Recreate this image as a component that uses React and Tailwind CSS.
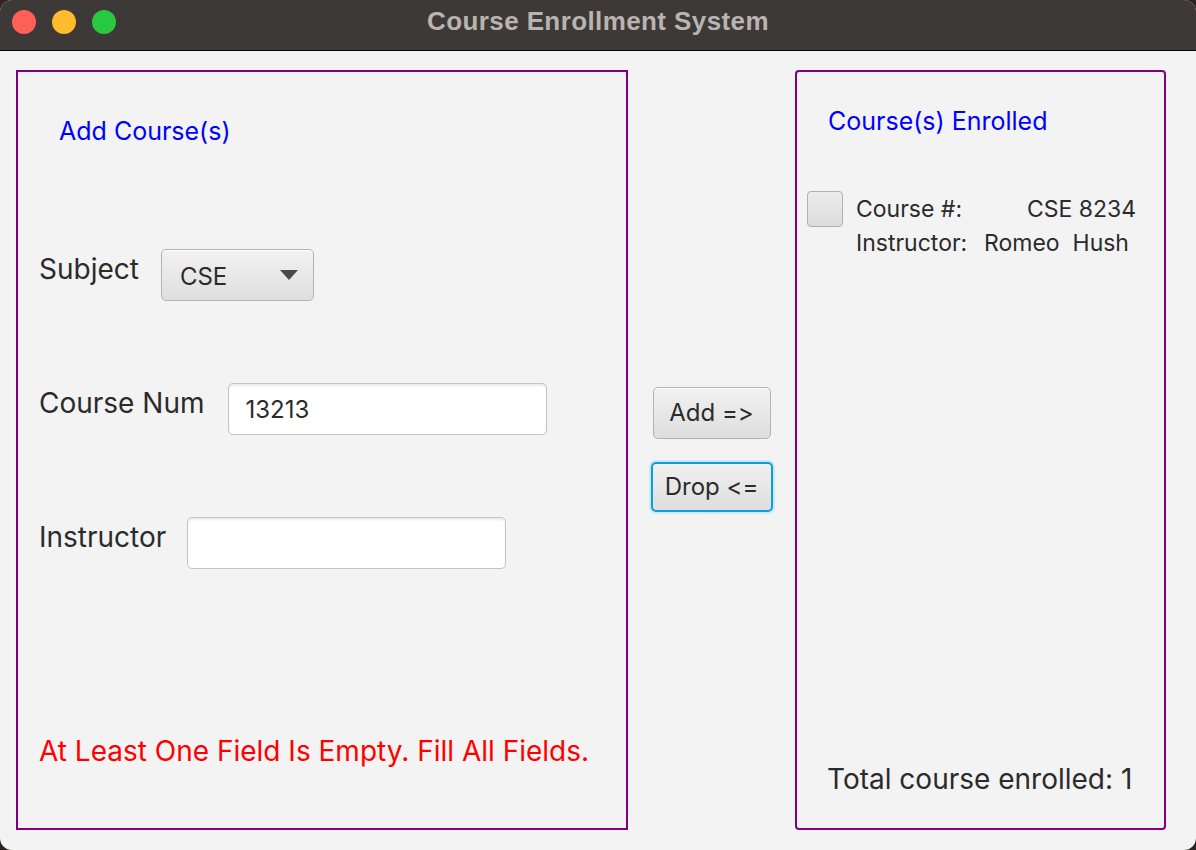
import React, { useState } from 'react';

const font = "font-['Inter','Liberation_Sans',sans-serif] [font-feature-settings:'calt'_0,'liga'_0]";

const TextBox = ({ value, width, onChange }) => (
  <input
    value={value}
    onChange={onChange}
    className={`h-[52px] ${width} rounded-[5px] border border-[#c4c4c4] bg-white px-[17px] text-[24px] text-[#2b2b2b] shadow-[inset_0_2px_2px_rgba(0,0,0,0.08)] outline-none ${font}`}
  />
);

const App = () => {
  const [courseNum, setCourseNum] = useState('13213');
  const [instructor, setInstructor] = useState('');

  return (
    <div className="h-[850px] w-[1196px] bg-[#2a2522]">
      <div className={`flex h-[850px] w-[1196px] flex-col overflow-hidden rounded-[12px] bg-[#f3f3f3] ${font}`}>
        {/* title bar */}
        <div className="relative flex h-[51px] shrink-0 items-center justify-center border-b border-black bg-[#3d3936] pb-[8px]">
          <div className="absolute left-[12px] top-[10px] flex gap-[16px]">
            <span className="h-[24px] w-[24px] rounded-full bg-[#fe5f57]" />
            <span className="h-[24px] w-[24px] rounded-full bg-[#febb2e]" />
            <span className="h-[24px] w-[24px] rounded-full bg-[#28c840]" />
          </div>
          <span className="text-[26px] font-bold tracking-[0.4px] text-[#b9b4b1] font-['Liberation_Sans','Inter',sans-serif]">
            Course Enrollment System
          </span>
        </div>

        {/* body */}
        <div className="flex pl-[16px] pt-[19px]">
          {/* left panel */}
          <div className="flex h-[760px] w-[612px] flex-col border-2 border-[#800080] pl-[21px]">
            <div className="mt-[44px] pl-[20px] text-[25px] leading-[30px] text-[#0000ff]">Add Course(s)</div>

            <div className="mt-[103px] flex items-start gap-[22px]">
              <span className="mt-[3px] text-[28px] leading-[34px] text-[#2b2b2b]">Subject</span>
              <div className="flex h-[52px] w-[153px] items-center justify-between rounded-[5px] border border-[#b3b3b3] bg-gradient-to-b from-[#f2f2f2] to-[#dedede] pl-[18px] pr-[15px] shadow-[inset_0_1px_0_#ffffff]">
                <span className="pt-[4px] text-[24px] text-[#2b2b2b]">CSE</span>
                <svg width="18" height="10" viewBox="0 0 18 10">
                  <path d="M0 0 H18 L9 10 Z" fill="#4a4a4a" />
                </svg>
              </div>
            </div>

            <div className="mt-[82px] flex items-start gap-[23px]">
              <span className="mt-[3px] text-[28px] leading-[34px] text-[#2b2b2b]">Course Num</span>
              <TextBox value={courseNum} width="w-[319px]" onChange={(e) => setCourseNum(e.target.value)} />
            </div>

            <div className="mt-[82px] flex items-start gap-[21px]">
              <span className="mt-[3px] text-[28px] leading-[34px] text-[#2b2b2b]">Instructor</span>
              <TextBox value={instructor} width="w-[319px]" onChange={(e) => setInstructor(e.target.value)} />
            </div>

            <div className="mt-[165px] text-[28px] leading-[34px] text-[#ff0000]">
              At Least One Field Is Empty. Fill All Fields.
            </div>
          </div>

          {/* middle buttons */}
          <div className="flex w-[167px] flex-col items-center pt-[317px]">
            <button className="h-[52px] w-[118px] rounded-[5px] border border-[#b3b3b3] bg-gradient-to-b from-[#f2f2f2] to-[#dedede] text-[24px] text-[#2b2b2b] shadow-[inset_0_1px_0_#ffffff]">
              Add =&gt;
            </button>
            <button className="mt-[23px] h-[50px] w-[122px] rounded-[5px] border-2 border-[#0a9fd8] bg-gradient-to-b from-[#f0f0f0] to-[#dedede] text-[24px] text-[#2b2b2b] shadow-[0_0_0_2px_#cde9f5]">
              Drop &lt;=
            </button>
          </div>

          {/* right panel */}
          <div className="flex h-[760px] w-[371px] flex-col rounded-[4px] border-2 border-[#800080]">
            <div className="mt-[34px] pl-[31px] text-[25px] leading-[30px] text-[#0000ff]">Course(s) Enrolled</div>

            <div className="mt-[55px] flex items-start pl-[10px]">
              <div className="h-[36px] w-[36px] shrink-0 rounded-[4px] border border-[#b0b0b0] bg-gradient-to-b from-[#ececec] to-[#dcdcdc]" />
              <div className="ml-[13px] mt-[1px] text-[23px] leading-[34px] text-[#2b2b2b]">
                <div className="flex">
                  <span className="w-[171px]">Course #:</span>
                  <span>CSE 8234</span>
                </div>
                <div className="flex">
                  <span className="w-[128px]">Instructor:</span>
                  <span>Romeo&nbsp; Hush</span>
                </div>
              </div>
            </div>

            <div className="mt-auto mb-[32px] pl-[30px] text-[28px] leading-[34px] text-[#2b2b2b]">
              Total course enrolled: 1
            </div>
          </div>
        </div>
      </div>
    </div>
  );
};

export default App;
